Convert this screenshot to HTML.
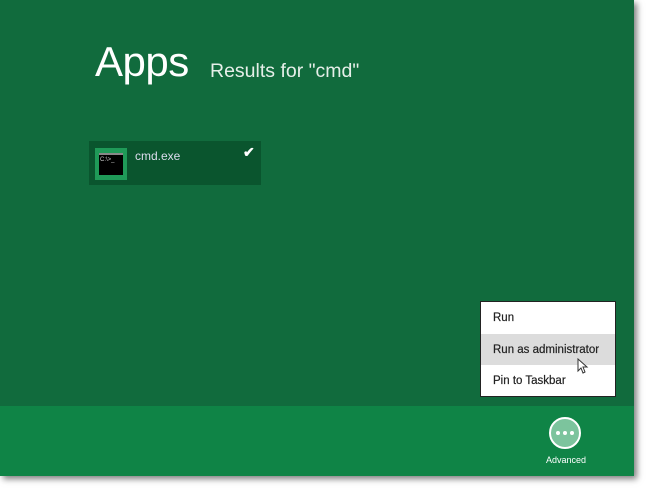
<!DOCTYPE html>
<html><head><style>
body{margin:0;width:650px;height:491px;background:#fff;position:relative;overflow:hidden;font-family:"Liberation Sans",sans-serif}
#main{position:absolute;left:0;top:0;width:634px;height:476px;background:#116b3d;box-shadow:3px 3px 6px rgba(0,0,0,.5)}
#bar{position:absolute;left:0;top:406px;width:634px;height:70px;background:#0f8446}
.t{position:absolute;color:#fff;white-space:nowrap}
</style></head><body>
<div id="main">
<div class="t" style="left:95px;top:38px;font-size:42px;font-weight:300;letter-spacing:-0.5px">Apps</div>
<div class="t" style="left:210px;top:60px;font-size:19.5px;color:#e6efe9">Results for "cmd"</div>
<div style="position:absolute;left:89px;top:141px;width:172px;height:44px;background:#0a552e"></div>
<div style="position:absolute;left:95px;top:148px;width:32px;height:32px;background:#1f9a58"></div>
<div style="position:absolute;left:99px;top:153px;width:24px;height:20px;background:#000;border-top:2px solid #888"></div>
<div class="t" style="left:100px;top:157px;font-size:6px;color:#ccc">C:\&gt;_</div>
<div class="t" style="left:135px;top:149px;font-size:12px;color:#dde">cmd.exe</div>
<div class="t" style="left:243px;top:144px;font-size:14px;font-weight:bold">✔</div>
<div id="bar"></div>
<div style="position:absolute;left:549px;top:417px;width:32px;height:32px;border:2px solid #fff;border-radius:50%;background:#7cc49d;box-sizing:border-box"></div>
<div style="position:absolute;left:556px;top:431px;width:4px;height:4px;border-radius:50%;background:#fff;box-shadow:7px 0 #fff,14px 0 #fff"></div>
<div class="t" style="left:546px;top:455px;font-size:9px">Advanced</div>
<div style="position:absolute;left:480px;top:301px;width:136px;height:96px;background:#fff;border:1px solid #222;box-sizing:border-box">
<div style="position:absolute;left:0;top:32px;width:134px;height:31px;background:#dcdcdc"></div>
<div style="position:absolute;left:12px;top:10px;font-size:11.5px;color:#222;-webkit-text-stroke:0.2px #222">Run</div>
<div style="position:absolute;left:12px;top:42px;font-size:11.5px;color:#222;-webkit-text-stroke:0.2px #222">Run as administrator</div>
<div style="position:absolute;left:12px;top:73px;font-size:11.5px;color:#222;-webkit-text-stroke:0.2px #222">Pin to Taskbar</div>
<svg style="position:absolute;left:96px;top:56px" width="12" height="18"><path d="M1 1 L1 13 L4 10 L6 15 L8 14 L6 9 L10 9 Z" fill="#fff" stroke="#333" stroke-width="1"/></svg>
</div>
</div>
</body></html>
